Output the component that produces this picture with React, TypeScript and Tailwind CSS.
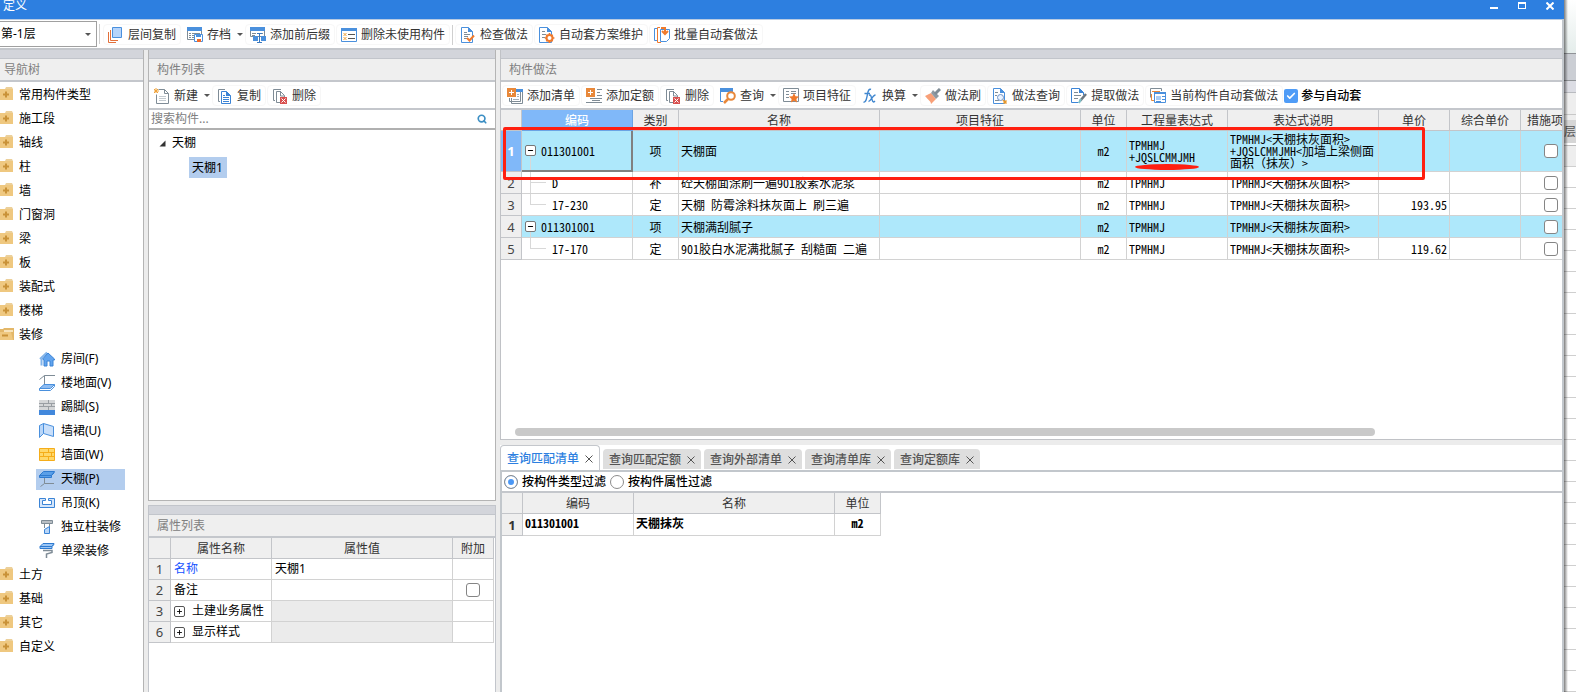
import type { ReactNode } from 'react';
import { Check, Minus, Plus, Search } from 'lucide-react';

const BLUE = '#4a90dd';
const ORANGE = '#e8883a';
const GRAY = '#7f8c96';

const icons: Record<string, ReactNode> = {
  layers: (
    <>
      <path d="M.5 5v10.500H8" stroke="#e2703a" />
      <path d="M2.500 3v10.500H10" stroke="#e2703a" />
      <path d="M4.500.5h9v10h-9z" fill="#b5d4fb" stroke={BLUE} />
    </>
  ),
  archive: (
    <>
      <path d="M.5.5h14v12H.5z" fill="#fff" stroke={GRAY} />
      <path d="M0 0h15v4H0z" fill={BLUE} />
      <path d="M2 6.500h2m1 0h8M2 8.500h2m1 0h2M2 10.500h2m1 0h2" stroke={GRAY} />
      <path d="M7.500 7.500h8v7h-8z" fill="#fff" stroke={BLUE} />
      <path d="M9 8h5v2H9z" fill={BLUE} />
      <path d="M10 12h4v3h-4z" fill="#f06a2a" />
    </>
  ),
  affix: (
    <>
      <path d="M.5.5h14v9H.5z" fill="#fff" stroke={GRAY} />
      <path d="M0 0h15v4H0z" fill={BLUE} />
      <path d="M2 6.500h4M9 6.500h4M2 8.500h3" stroke={GRAY} />
      <path d="M3 9h5v5H3zM11 9h5v5h-5z" fill={BLUE} />
      <path d="M7 6.500h5M9.500 6v10M7 15.500h5" stroke="#3b78bd" />
    </>
  ),
  unused: (
    <>
      <path d="M.5 1.500h15v13H.5z" fill="#fff" stroke={BLUE} />
      <path d="M0 1h16v3H0z" fill={BLUE} />
      <path d="M7 7.500h7M7 11.500h7" stroke="#555" />
      <path d="m2.500 6 3 3m0-3-3 3m0 1 3 3m0-3-3 3" stroke="#efa23a" />
    </>
  ),
  docCheck: (
    <>
      <path d="M1.500.5h7l4 4v11h-11z" fill="#fff" stroke={BLUE} />
      <path d="M8 0v5h5z" fill={BLUE} />
      <path d="M4 5.500h3M4 7.500h6M4 9.500h4M4 11.500h3" stroke={GRAY} />
      <path d="m7 11 2.500 2.500L14 8.500" stroke="#f07a2c" strokeWidth="2" />
    </>
  ),
  docGear: (
    <>
      <path d="M.5.500h8l4 4v11H.5z" fill="#fff" stroke={BLUE} />
      <path d="M8 0v5h5z" fill={BLUE} />
      <path d="M3 4.500h3M3 7.500h4M3 10.500h3" stroke={GRAY} />
      <circle cx="10.500" cy="11" r="3" fill="#fff" stroke="#f07a2c" strokeWidth="2" />
      <path d="M10.500 6v2m0 6v2M5.800 11h1.800m6 0h1.800M7.300 7.800l1 1m4.400 4.400 1 1m0-6.400-1 1m-4.400 4.400-1 1" stroke="#f07a2c" strokeWidth="1.600" />
    </>
  ),
  batch: (
    <>
      <path d="M3 1.500H.5v12H3" stroke={BLUE} />
      <path d="M6 .5H3.500v15H7" stroke="#f07a2c" />
      <path d="M6.500 2.500h9v9l-3 3h-6z" fill="#fff" stroke={BLUE} />
      <path d="M7 1h4v5m-3-2 3 3 3-3" stroke="#f07a2c" strokeWidth="2" />
    </>
  ),
  newDoc: (
    <>
      <path d="M4.500 1.500h6l4 4v10h-12v-9" fill="#fff" stroke={GRAY} />
      <path d="M10.500 1.500v4h4" stroke={GRAY} />
      <path d="M5 8.500h7M5 10.500h7M5 12.500h7" stroke="#c3cad0" />
      <path d="m0 1 4 4m0-4L0 5m2-5v5M0 3h5" stroke="#efa23a" />
    </>
  ),
  copy: (
    <>
      <path d="M8 1.500H1.500v12H3" stroke={GRAY} />
      <path d="M4.500 3.500h5l4 4v8h-9z" fill="#fff" stroke="#3b84d6" />
      <path d="M9 3v5h5z" fill="#3b84d6" />
      <path d="M6 7.500h2M6 9.500h6M6 11.500h6M6 13.500h6" stroke="#3b84d6" />
    </>
  ),
  remove: (
    <>
      <path d="M9 1.500H1.500v11H3" stroke={GRAY} />
      <path d="M4.500 3.500h4l4 4v7h-8z" fill="#fff" stroke={GRAY} />
      <path d="M8.500 3v5h4" stroke={GRAY} />
      <path d="M8 9h7v7H8z" fill="#d8504f" />
      <path d="m9.500 10.500 4 4m0-4-4 4" stroke="#fff" />
    </>
  ),
  addList: (
    <>
      <path d="M9 1h7v3H9z" fill={BLUE} />
      <path d="M15.500 4v11.500h-11V10M13.500 4v9.500h-11V10" stroke={GRAY} />
      <path d="M10 6.500h2M10 8.500h2M6 11.500h6" stroke="#a6afb6" />
      <path d="M0 0h9v9H0z" fill={ORANGE} />
      <path d="M2 4.500h5M4.500 2v5" stroke="#fff" />
    </>
  ),
  addQuota: (
    <>
      <path d="M11 1.500h5M11 4.500h3M11 7.500h5M4 10.500h12M0 14.500h16M6 12.500h8" stroke={GRAY} />
      <path d="M0 0h9v9H0z" fill={ORANGE} />
      <path d="M2 4.500h5M4.500 2v5" stroke="#fff" />
    </>
  ),
  query: (
    <>
      <path d="M3 13.500H.5V2" stroke={BLUE} />
      <path d="M0 0h13v4H0z" fill={BLUE} />
      <circle cx="11" cy="8" r="3.800" fill="#fff" stroke={ORANGE} strokeWidth="2" />
      <path d="m8 11-4 4" stroke={ORANGE} strokeWidth="2.500" />
    </>
  ),
  feature: (
    <>
      <path d="M.5.5h15v13H.5z" fill="#fff" stroke={GRAY} />
      <path d="M3 3.500h3M3 6.500h3M3 9.500h3M8 3.500h5M8 5.500h5" stroke={GRAY} />
      <path d="m11 5 1.500 3.200 3.500.4-2.600 2.400.7 3.500L11 12.800l-3.100 1.700.7-3.500L6 8.600l3.500-.4z" fill="#f07a2c" />
    </>
  ),
  fx: (
    <path
      d="M9 1.500C7 .5 6 3 5.500 6s-1.500 9-4 8M2.500 5.500H8M7 7.500c2-1.500 2 1 3 4s1.500 3 3 1.500M13.500 7C10.500 7 9 13.500 6.500 13.500"
      stroke="#3f86cf"
      strokeWidth="1.400"
    />
  ),
  brush: (
    <>
      <path d="m0 8 6-3 5 6-5 5c0-3-3-4-6-8z" fill="#f8a078" />
      <path d="m6 5 2-3 6 6-3 3z" fill="#8f9aa3" />
      <path d="m10 6 5-5" stroke="#7f8c96" strokeWidth="3" />
    </>
  ),
  docSearch: (
    <>
      <path d="M1.500.5h7l4 4v11h-11z" fill="#fff" stroke={BLUE} />
      <path d="M8 0v5h5z" fill={BLUE} />
      <path d="M3 4.500h3M3 7.500h2M3 12.500h4" stroke={GRAY} />
      <circle cx="8.500" cy="9.500" r="3" fill="#eaf3ff" stroke="#6f93c9" />
      <path d="m11 12 3.500 3.500m0-3-3 3" stroke="#e8982a" strokeWidth="1.600" />
    </>
  ),
  extract: (
    <>
      <path d="M12.500 7V4.500l-4-4h-8v14h7" fill="#fff" stroke="#3b84d6" />
      <path d="M8 0v5h5z" fill="#3b84d6" />
      <path d="M3 4.500h4M3 7.500h7M3 10.500h4" stroke={GRAY} />
      <path d="m15 6-6 7" stroke="#6b767f" strokeWidth="2.500" />
      <path d="m10 11-2 4" stroke="#7cc0c8" strokeWidth="2" />
    </>
  ),
  current: (
    <>
      <path d="M.5 9.500v-9h11V3" stroke={GRAY} />
      <path d="M2 3.500h8M1.500 6v6.500H4" stroke="#e8883a" />
      <path d="M4.500 4.500h11v10h-11z" fill="#fff" stroke={BLUE} />
      <path d="M4 4h12v2H4z" fill={BLUE} />
      <path d="M6 8h5v4H6z" fill="#a9cdf6" />
      <path d="M12 8.500h3M12 11.500h3M6 13.500h5" stroke={BLUE} />
    </>
  ),
  room: (
    <>
      <path d="m1 8 7-6.500M2.500 8v6.500" stroke="#82b4ea" strokeWidth="2" />
      <path d="m3.500 8 5.500-6 6.500 6v1H14v6h-3v-5H8v5H5V9z" fill="#62a4ee" stroke="#3b84d6" />
    </>
  ),
  floor: (
    <>
      <path d="M16 .5H5.500V9M5.500.5l-5 4" stroke={GRAY} />
      <path d="M5 9.500h10.500l-4 4H.5z" fill="#8fbdf2" stroke={BLUE} />
      <path d="M.5 13.500v2h11l4-4v-2" stroke={BLUE} />
    </>
  ),
  skirting: (
    <>
      <path d="M0 1h16v10H0z" fill="#d4d6d8" />
      <path d="M0 4.500h16M0 7.500h16M9.500 1v3M4.500 5v3M12.500 5v3M9.500 8v3" stroke="#999ea3" />
      <path d="M0 11h16v5H0z" fill="#4288dc" />
    </>
  ),
  dado: (
    <>
      <path d="m.5 2.500 4-2v10l-4 4z" fill="#b9d6f8" stroke={BLUE} />
      <path d="m4.500.5 10 3v10l-10-3z" fill="#c9dffa" stroke={BLUE} />
    </>
  ),
  wall: (
    <>
      <path d="M.5 1.500h15v12H.5z" fill="#ffd86b" stroke="#f5ad1a" />
      <path d="M0 5.500h16M0 9.500h16M9.500 1v4M4.500 5v4M12.500 5v4M9.500 9v5" stroke="#f5ad1a" />
    </>
  ),
  ceiling: (
    <>
      <path d="m.5 4.500 4-4h11l-3 4v2H.5z" fill="#5a9fe8" stroke="#2f7bd0" />
      <path d="M.5 4.500h12l3-3" stroke="#2f7bd0" />
      <path d="M5.500 7v5.500H15M5.500 12.500l-4 3" stroke={GRAY} />
    </>
  ),
  suspended: (
    <path d="M.5 3.500h6v2h-3v4h9v-4h-3v-2h6v9H.5z" fill="#d5e6fb" stroke="#3b84d6" />
  ),
  column: (
    <>
      <path d="M2.500 1.500h11v3h-11z" fill="#b9bfc4" stroke={GRAY} />
      <path d="M5.500 5v4M10.500 5v4" stroke={GRAY} />
      <path d="M5.500 10.500v4h5v-7z" fill="#b9d6f8" stroke="#3b84d6" />
    </>
  ),
  beam: (
    <>
      <path d="M1 3.500 4 .5h11l-2 3v2H1z" fill="#9cc6f5" stroke="#2f7bd0" />
      <path d="M1 3.500h12l2-2" stroke="#2f7bd0" />
      <path d="M4 7.500h9v2L7.500 11v4" stroke={GRAY} strokeWidth="1.500" />
    </>
  ),
  folder: (
    <>
      <path d="M6 0h6l1 2H5z" fill="#ecd09a" />
      <path d="M0 2h13v11H0z" fill="#efc880" />
      <path d="M3 7.500h6M6 4.500v6" stroke="#c99238" strokeWidth="2" />
    </>
  ),
  folderOpen: (
    <>
      <path d="M0 2h3l1-1h10v12H0z" fill="#e3b769" />
      <path d="M4 3h9v2H4z" fill="#f7e3bb" />
      <path d="M0 5h11l2 8H0z" fill="#efc880" />
      <path d="M2 8.500h6" stroke="#c99238" strokeWidth="2" />
    </>
  ),
};

function Icon({ name }: { name: string }) {
  return (
    <svg width="16" height="16" viewBox="0 0 16 16" fill="none" className="shrink-0" aria-hidden="true">
      {icons[name]}
    </svg>
  );
}

function Cross({ className }: { className: string }) {
  return (
    <svg width="8" height="8" viewBox="0 0 8 8" fill="none" className={className} aria-hidden="true">
      <path d="m.5.5 7 7m0-7-7 7" stroke="currentColor" />
    </svg>
  );
}

function Caret() {
  return <span className="ml-0.5 h-0 w-0 border-x-3 border-t-3 border-x-transparent border-t-[#555]" />;
}

function ToolButton({ icon, label, menu }: { icon: string; label: string; menu?: boolean }) {
  return (
    <button
      type="button"
      className={`flex h-[21px] shrink-0 items-center gap-1 rounded-sm border pl-1 whitespace-nowrap text-[#333] ${menu ? 'border-transparent' : 'border-[#f7f7f7] pr-1'}`}
    >
      <Icon name={icon} />
      {label}
      {menu && <Caret />}
    </button>
  );
}

function PanelHead({ title, pad }: { title: string; pad: string }) {
  return (
    <div className="shrink-0">
      <div className="h-[9px] border-b border-[#c2c5cb] bg-[#d3d5db]" />
      <h2 className={`h-[23px] border-b-2 border-[#c4c7cc] bg-[#efefef] leading-[22px] text-[#808080] ${pad}`}>{title}</h2>
    </div>
  );
}

function Tick({ label }: { label: string }) {
  return (
    <input
      type="checkbox"
      aria-label={label}
      className="block h-3.5 w-3.5 appearance-none rounded-[3px] border border-[#858585] bg-white"
    />
  );
}

const navItems = ['常用构件类型', '施工段', '轴线', '柱', '墙', '门窗洞', '梁', '板', '装配式', '楼梯', '装修'];
const navTail = ['土方', '基础', '其它', '自定义'];
const finishes = [
  { icon: 'room', label: '房间(F)' },
  { icon: 'floor', label: '楼地面(V)' },
  { icon: 'skirting', label: '踢脚(S)' },
  { icon: 'dado', label: '墙裙(U)' },
  { icon: 'wall', label: '墙面(W)' },
  { icon: 'ceiling', label: '天棚(P)', active: true },
  { icon: 'suspended', label: '吊顶(K)' },
  { icon: 'column', label: '独立柱装修' },
  { icon: 'beam', label: '单梁装修' },
];

function NavRow({ label }: { label: string }) {
  return (
    <li className="flex h-6 items-center gap-[3px]">
      <Icon name={label === '装修' ? 'folderOpen' : 'folder'} />
      {label}
    </li>
  );
}

function NavTree() {
  return (
    <nav className="flex w-36 shrink-0 flex-col border-r border-[#b4b4b4] bg-white">
      <PanelHead title="导航树" pad="pl-1" />
      <ul className="pt-px">
        {navItems.map((label) => (
          <NavRow key={label} label={label} />
        ))}
        {finishes.map((item) => (
          <li key={item.label} className="flex h-6 items-center pl-9">
            <span className={`flex h-[21px] w-[89px] items-center gap-1.5 pl-[3px] ${item.active ? 'bg-[#b3cdee]' : ''}`}>
              <Icon name={item.icon} />
              {item.label}
            </span>
          </li>
        ))}
        {navTail.map((label) => (
          <NavRow key={label} label={label} />
        ))}
      </ul>
    </nav>
  );
}

function ComponentList() {
  return (
    <section className="flex min-h-0 flex-1 flex-col border-x border-b border-[#b4b4b4] bg-white">
      <PanelHead title="构件列表" pad="pl-2" />
      <div className="flex h-7 shrink-0 items-center gap-px border-b-2 border-[#c4c7cc] pt-px">
        <ToolButton icon="newDoc" label="新建" menu />
        <ToolButton icon="copy" label="复制" />
        <ToolButton icon="remove" label="删除" />
      </div>
      <div className="flex h-5 shrink-0 items-center border-b-2 border-[#b0b0b0] pr-2">
        <input
          type="text"
          aria-label="搜索构件"
          placeholder="搜索构件..."
          className="min-w-0 flex-1 pl-0.5 leading-4 outline-none placeholder:text-[#808080]"
        />
        <Search size={10} strokeWidth={4} className="text-[#3c8fc4]" />
      </div>
      <ul className="pt-px">
        <li className="flex h-6 items-center gap-1.5 pl-2.5">
          <svg width="7" height="7" viewBox="0 0 7 7" aria-hidden="true">
            <path d="M6.500.5v6h-6z" fill="#333" />
          </svg>
          天棚
        </li>
        <li className="flex h-6 items-center pl-10">
          <span className="h-[21px] bg-[#b3cdee] px-[3px] pr-1 leading-[21px]">天棚1</span>
        </li>
      </ul>
    </section>
  );
}

const headCell = 'border-r border-b border-[#c3c5c9] bg-[#efefef] p-0 pt-px text-center font-normal text-[#333]';
const bodyCell = 'border-r border-b border-[#d2d2d2] p-0';
const numCell = 'border-r border-b border-[#c3c5c9] bg-[#efefef] p-0 text-center text-[13px] leading-4 font-normal text-[#444]';
const gridFont = "font-['Noto_Sans_CJK_SC',sans-serif] [font-feature-settings:'hwid'] leading-3";

const props = [
  { no: 1, name: '名称', value: '天棚1' },
  { no: 2, name: '备注', tick: true },
  { no: 3, name: '土建业务属性', group: true },
  { no: 6, name: '显示样式', group: true },
];

function PropertyList() {
  return (
    <section className="h-[187px] shrink-0 border-x border-t border-[#c2c5cb] bg-white">
      <PanelHead title="属性列表" pad="pl-2" />
      <table className="w-[345px] table-fixed border-separate border-spacing-0">
        <colgroup>
          <col className="w-[22px]" />
          <col className="w-[101px]" />
          <col />
          <col className="w-[41px]" />
        </colgroup>
        <thead>
          <tr className="h-[21px]">
            <th className={headCell} />
            <th className={headCell}>属性名称</th>
            <th className={headCell}>属性值</th>
            <th className={headCell}>附加</th>
          </tr>
        </thead>
        <tbody>
          {props.map((row) => (
            <tr key={row.no} className="h-[21px]">
              <th className={numCell}>{row.no}</th>
              <td className={bodyCell}>
                <div className={`flex items-center gap-[7px] pl-[3px] ${row.no === 1 ? 'text-[#1552ff]' : ''}`}>
                  {row.group && (
                    <button type="button" aria-label="展开" className="flex h-[11px] w-[11px] items-center justify-center rounded-xs border border-[#555]">
                      <Plus size={7} strokeWidth={3} />
                    </button>
                  )}
                  {row.name}
                </div>
              </td>
              <td className={`${bodyCell} pl-[3px] ${row.group ? 'bg-[#ebebeb]' : ''}`}>{row.value}</td>
              <td className={bodyCell}>
                <div className="flex justify-center">{row.tick && <Tick label="附加" />}</div>
              </td>
            </tr>
          ))}
        </tbody>
      </table>
    </section>
  );
}

// full-width brackets keep their full width between the half-width letters
const wideBracket = (mark: string) => <span className="[font-feature-settings:normal]">{mark}</span>;

const works: { code: string; kind: string; name: string; expr: string; desc: ReactNode; price: string }[] = [
  {
    code: '011301001',
    kind: '项',
    name: '天棚面',
    expr: 'TPMHMJ\n+JQSLCMMJMH',
    desc: (
      <>
        {'TPMHMJ<天棚抹灰面积>\n+JQSLCMMJMH<加墙上梁侧面\n面积'}
        {wideBracket('（')}抹灰{wideBracket('）')}{'>'}
      </>
    ),
    price: '',
  },
  { code: 'D', kind: '补', name: '砼天棚面涂刷一遍901胶素水泥浆', expr: 'TPMHMJ', desc: 'TPMHMJ<天棚抹灰面积>', price: '' },
  { code: '17-230', kind: '定', name: '天棚 防霉涂料抹灰面上 刷三遍', expr: 'TPMHMJ', desc: 'TPMHMJ<天棚抹灰面积>', price: '193.95' },
  { code: '011301001', kind: '项', name: '天棚满刮腻子', expr: 'TPMHMJ', desc: 'TPMHMJ<天棚抹灰面积>', price: '' },
  { code: '17-170', kind: '定', name: '901胶白水泥满批腻子 刮糙面 二遍', expr: 'TPMHMJ', desc: 'TPMHMJ<天棚抹灰面积>', price: '119.62' },
];
const workHeads = ['类别', '名称', '项目特征', '单位', '工程量表达式', '表达式说明', '单价', '综合单价'];

function WorkTable() {
  return (
    <div className="relative">
      <div className="overflow-hidden">
        <table className="w-[1080px] table-fixed border-separate border-spacing-0">
          <colgroup>
            <col className="w-[21px]" />
            <col className="w-[111px]" />
            <col className="w-[46px]" />
            <col className="w-[201px]" />
            <col className="w-[201px]" />
            <col className="w-[46px]" />
            <col className="w-[101px]" />
            <col className="w-[151px]" />
            <col className="w-[71px]" />
            <col className="w-[71px]" />
            <col />
          </colgroup>
          <thead>
            <tr className="h-[21px]">
              <th className={headCell} />
              <th className="border-r border-b border-[#6ba4e4] bg-[#80b8f9] p-0 pt-px font-medium text-white">编码</th>
              {workHeads.map((head) => (
                <th key={head} className={headCell}>{head}</th>
              ))}
              <th className="border-b border-[#c3c5c9] bg-[#efefef] p-0 pt-px pl-1.5 text-left font-normal text-[#333]">措施项</th>
            </tr>
          </thead>
          <tbody className={gridFont}>
            {works.map((row, i) => {
              const item = row.kind === '项';
              return (
                <tr key={i} className={`${i === 0 ? 'h-[41px]' : 'h-[22px]'} ${item ? 'bg-[#aee8fb]' : 'bg-white'}`}>
                  <th className={`border-r border-b border-[#c3c5c9] p-0 font-['Noto_Sans'] text-[13px] leading-4 ${i === 0 ? 'bg-[#80b8f9] font-bold text-white' : 'bg-[#efefef] font-normal text-[#444]'}`}>
                    {i + 1}
                  </th>
                  <td className={`relative p-0 ${i === 0 ? 'border-r-2 border-b-2 border-[#808080]' : 'border-r border-b border-[#d2d2d2]'}`}>
                    {item ? (
                      <>
                        <span className="absolute top-1/2 bottom-0 left-2 border-l border-[#d8d8d8]" />
                        <div className="relative flex items-center gap-[5px] pl-[3px]">
                          <button type="button" aria-label="折叠" className="flex h-[11px] w-[11px] items-center justify-center rounded-xs border border-[#777] bg-white">
                            <Minus size={7} strokeWidth={4} />
                          </button>
                          {row.code}
                        </div>
                      </>
                    ) : (
                      <>
                        <span className="absolute top-0 left-2 h-1/2 w-4 border-b border-l border-[#d8d8d8]" />
                        {i === 1 && <span className="absolute top-0 bottom-0 left-2 border-l border-[#d8d8d8]" />}
                        <div className="pl-[30px]">{row.code}</div>
                      </>
                    )}
                  </td>
                  <td className={`${bodyCell} text-center`}>{row.kind}</td>
                  <td className={`${bodyCell} pl-0.5 whitespace-nowrap`}>{row.name}</td>
                  <td className={bodyCell} />
                  <td className={`${bodyCell} text-center`}>m2</td>
                  <td className={`${bodyCell} pl-0.5 whitespace-pre`}>{row.expr}</td>
                  <td className={`${bodyCell} pl-0.5 whitespace-pre`}>{row.desc}</td>
                  <td className={`${bodyCell} pr-0.5 text-right`}>{row.price}</td>
                  <td className={bodyCell} />
                  <td className="border-b border-[#d2d2d2] p-0">
                    <div className="flex justify-center">
                      <Tick label="措施项" />
                    </div>
                  </td>
                </tr>
              );
            })}
          </tbody>
        </table>
      </div>
      {/* red review mark over the first row */}
      <div className="pointer-events-none absolute top-[17px] left-0.5 h-[53px] w-[922px] rounded-xs border-3 border-[#ff1f10]" />
      <div className="pointer-events-none absolute top-[54px] left-[634px] h-1.5 w-16 rounded-[50%] bg-[#ff1f10]" />
    </div>
  );
}

const tabs = ['查询匹配清单', '查询匹配定额', '查询外部清单', '查询清单库', '查询定额库'];

function QueryPanel() {
  return (
    <section className="flex h-[247px] shrink-0 flex-col bg-white">
      <div role="tablist" className="flex items-end gap-[3px]">
        {tabs.map((tab, i) => (
          <button
            key={tab}
            type="button"
            role="tab"
            aria-selected={i === 0}
            className={
              i === 0
                ? 'flex h-[25px] items-center gap-1.5 rounded-t-sm border border-b-0 border-[#c4c7cc] bg-white px-1.5 pt-px font-medium text-[#2d7fe0]'
                : 'mb-px flex h-5 items-center gap-1.5 rounded-t-sm bg-[#dedede] px-1.5 pt-px font-medium text-[#555]'
            }
          >
            {tab}
            <Cross className="text-[#555]" />
          </button>
        ))}
      </div>
      <div className="flex flex-1 flex-col border-t-2 border-l-2 border-[#c2c7cc]">
        <div className="flex h-[21px] items-center gap-1 border-b-2 border-[#c4c7cc] pl-0.5 font-medium">
          <label className="flex items-center gap-1">
            <input type="radio" name="filter" defaultChecked className="h-3.5 w-3.5 appearance-none rounded-full border border-[#8c8c8c] bg-white checked:bg-[#4a97f5] checked:shadow-[inset_0_0_0_3px_white]" />
            按构件类型过滤
          </label>
          <label className="flex items-center gap-1">
            <input type="radio" name="filter" className="h-3.5 w-3.5 appearance-none rounded-full border border-[#8c8c8c] bg-white" />
            按构件属性过滤
          </label>
        </div>
        <table className="w-[379px] table-fixed border-separate border-spacing-0">
          <colgroup>
            <col className="w-[21px]" />
            <col className="w-[111px]" />
            <col />
            <col className="w-[46px]" />
          </colgroup>
          <thead>
            <tr className="h-[21px]">
              <th className={headCell} />
              <th className={headCell}>编码</th>
              <th className={headCell}>名称</th>
              <th className={headCell}>单位</th>
            </tr>
          </thead>
          <tbody>
            <tr className="h-[22px]">
              <th className="border-r border-b border-[#c3c5c9] bg-[#efefef] p-0 text-[13px] leading-4 font-bold text-[#333]">1</th>
              <td className={`${bodyCell} ${gridFont} pb-[3px] pl-0.5 font-bold`}>011301001</td>
              <td className={`${bodyCell} ${gridFont} pb-[3px] pl-0.5 font-bold`}>天棚抹灰</td>
              <td className={`${bodyCell} ${gridFont} pb-[3px] text-center font-bold`}>m2</td>
            </tr>
          </tbody>
        </table>
      </div>
    </section>
  );
}

function WorkPanel() {
  return (
    <main className="flex min-w-0 flex-1 flex-col border-r-2 border-[#c2c7cc] bg-[#ececec]">
      <section className="mb-[5px] flex min-h-0 flex-1 flex-col border-b border-l border-[#c0c2c6] bg-white">
        <PanelHead title="构件做法" pad="pl-2" />
        <div className="flex h-7 shrink-0 items-center gap-px overflow-hidden border-b-2 border-[#c4c7cc] pt-px pl-px">
          <ToolButton icon="addList" label="添加清单" />
          <ToolButton icon="addQuota" label="添加定额" />
          <ToolButton icon="remove" label="删除" />
          <ToolButton icon="query" label="查询" menu />
          <ToolButton icon="feature" label="项目特征" />
          <ToolButton icon="fx" label="换算" menu />
          <ToolButton icon="brush" label="做法刷" />
          <ToolButton icon="docSearch" label="做法查询" />
          <ToolButton icon="extract" label="提取做法" />
          <ToolButton icon="current" label="当前构件自动套做法" />
          <label className="relative flex shrink-0 items-center gap-[3px] font-medium">
            <input type="checkbox" defaultChecked className="h-3.5 w-3.5 appearance-none rounded-xs bg-[#4f9cf7]" />
            <Check size={10} strokeWidth={4} className="pointer-events-none absolute left-0.5 text-white" />
            参与自动套
          </label>
        </div>
        <WorkTable />
        <div className="mt-auto mr-[187px] mb-[3px] ml-3.5 h-2 shrink-0 rounded-full bg-[#c9c9c9]" />
      </section>
      <QueryPanel />
    </main>
  );
}

/* strip of the application window that lies behind this dialog */
function Backdrop() {
  return (
    <aside className="relative flex w-3 shrink-0 flex-col overflow-hidden bg-white">
      <div className="h-[53px] shrink-0 bg-linear-to-b from-white to-[#e4edeb]" />
      <div className="h-7 shrink-0 border-y border-[#8f9296] bg-[#cbced4]" />
      <div className="h-3 shrink-0 border-b border-[#b9bbc0] bg-[#dcdde4]" />
      <div className="h-[22px] shrink-0 border-b border-[#c8c8c8] bg-[#eeeeee]" />
      <div className="h-[5px] shrink-0 bg-[#eeeeee]" />
      <div className="flex h-[23px] shrink-0 items-center justify-end bg-[#d6d6d6] text-[#555]">层</div>
      <div className="h-[3px] shrink-0 border-b border-[#bbb]" />
      <div className="h-[21px] shrink-0 border-b border-[#cfcfcf] bg-[#eeeeee]" />
      {Array.from({ length: 25 }, (_, i) => (
        <div key={i} className="h-[21px] shrink-0 border-b border-[#cfcfcf]" />
      ))}
      <div className="absolute inset-y-0 left-0 w-1 bg-linear-to-r from-black/50 to-transparent" />
    </aside>
  );
}

export default function App() {
  return (
    <div className="flex h-screen overflow-hidden bg-white font-['Noto_Sans','Noto_Sans_CJK_SC',sans-serif] text-xs leading-4 text-black">
      <div className="flex min-w-0 flex-1 flex-col">
        <header className="flex h-[19px] shrink-0 items-start justify-between bg-[#2d7fe0] pr-2.5 pl-[3px] text-white">
          <h1 className="leading-3">定义</h1>
          <div className="flex gap-5">
            <button type="button" aria-label="最小化" className="flex h-[9px] w-2 items-end">
              <span className="h-0.5 w-full bg-white" />
            </button>
            <button type="button" aria-label="最大化" className="mt-0.5 h-[7px] w-2 border border-t-2 border-white" />
            <button type="button" aria-label="关闭" className="pt-0.5">
              <Cross className="stroke-2" />
            </button>
          </div>
        </header>
        <div className="flex h-[31px] shrink-0 items-center gap-px border-t border-r-2 border-b-2 border-t-[#b9cbe2] border-r-[#c2c7cc] border-b-[#c4c7cc]">
          <div className="relative flex shrink-0 items-center">
            <select aria-label="楼层" className="h-[26px] w-[97px] appearance-none border border-l-0 border-[#a0a0a0] bg-white pl-px">
              <option>第-1层</option>
            </select>
            <span className="pointer-events-none absolute right-1.5 h-0 w-0 border-x-3 border-t-3 border-x-transparent border-t-[#555]" />
          </div>
          <span className="mx-px h-5 w-px bg-[#cfcfcf]" />
          <div className="flex items-center gap-px pt-px pl-px">
            <ToolButton icon="layers" label="层间复制" />
            <ToolButton icon="archive" label="存档" menu />
            <ToolButton icon="affix" label="添加前后缀" />
            <ToolButton icon="unused" label="删除未使用构件" />
            <span className="mx-px h-5 w-px bg-[#cfcfcf]" />
            <ToolButton icon="docCheck" label="检查做法" />
            <ToolButton icon="docGear" label="自动套方案维护" />
            <ToolButton icon="batch" label="批量自动套做法" />
          </div>
        </div>
        <div className="flex min-h-0 flex-1 gap-1 bg-[#ececec]">
          <NavTree />
          <div className="flex w-[348px] shrink-0 flex-col gap-1">
            <ComponentList />
            <PropertyList />
          </div>
          <WorkPanel />
        </div>
      </div>
      <Backdrop />
    </div>
  );
}
